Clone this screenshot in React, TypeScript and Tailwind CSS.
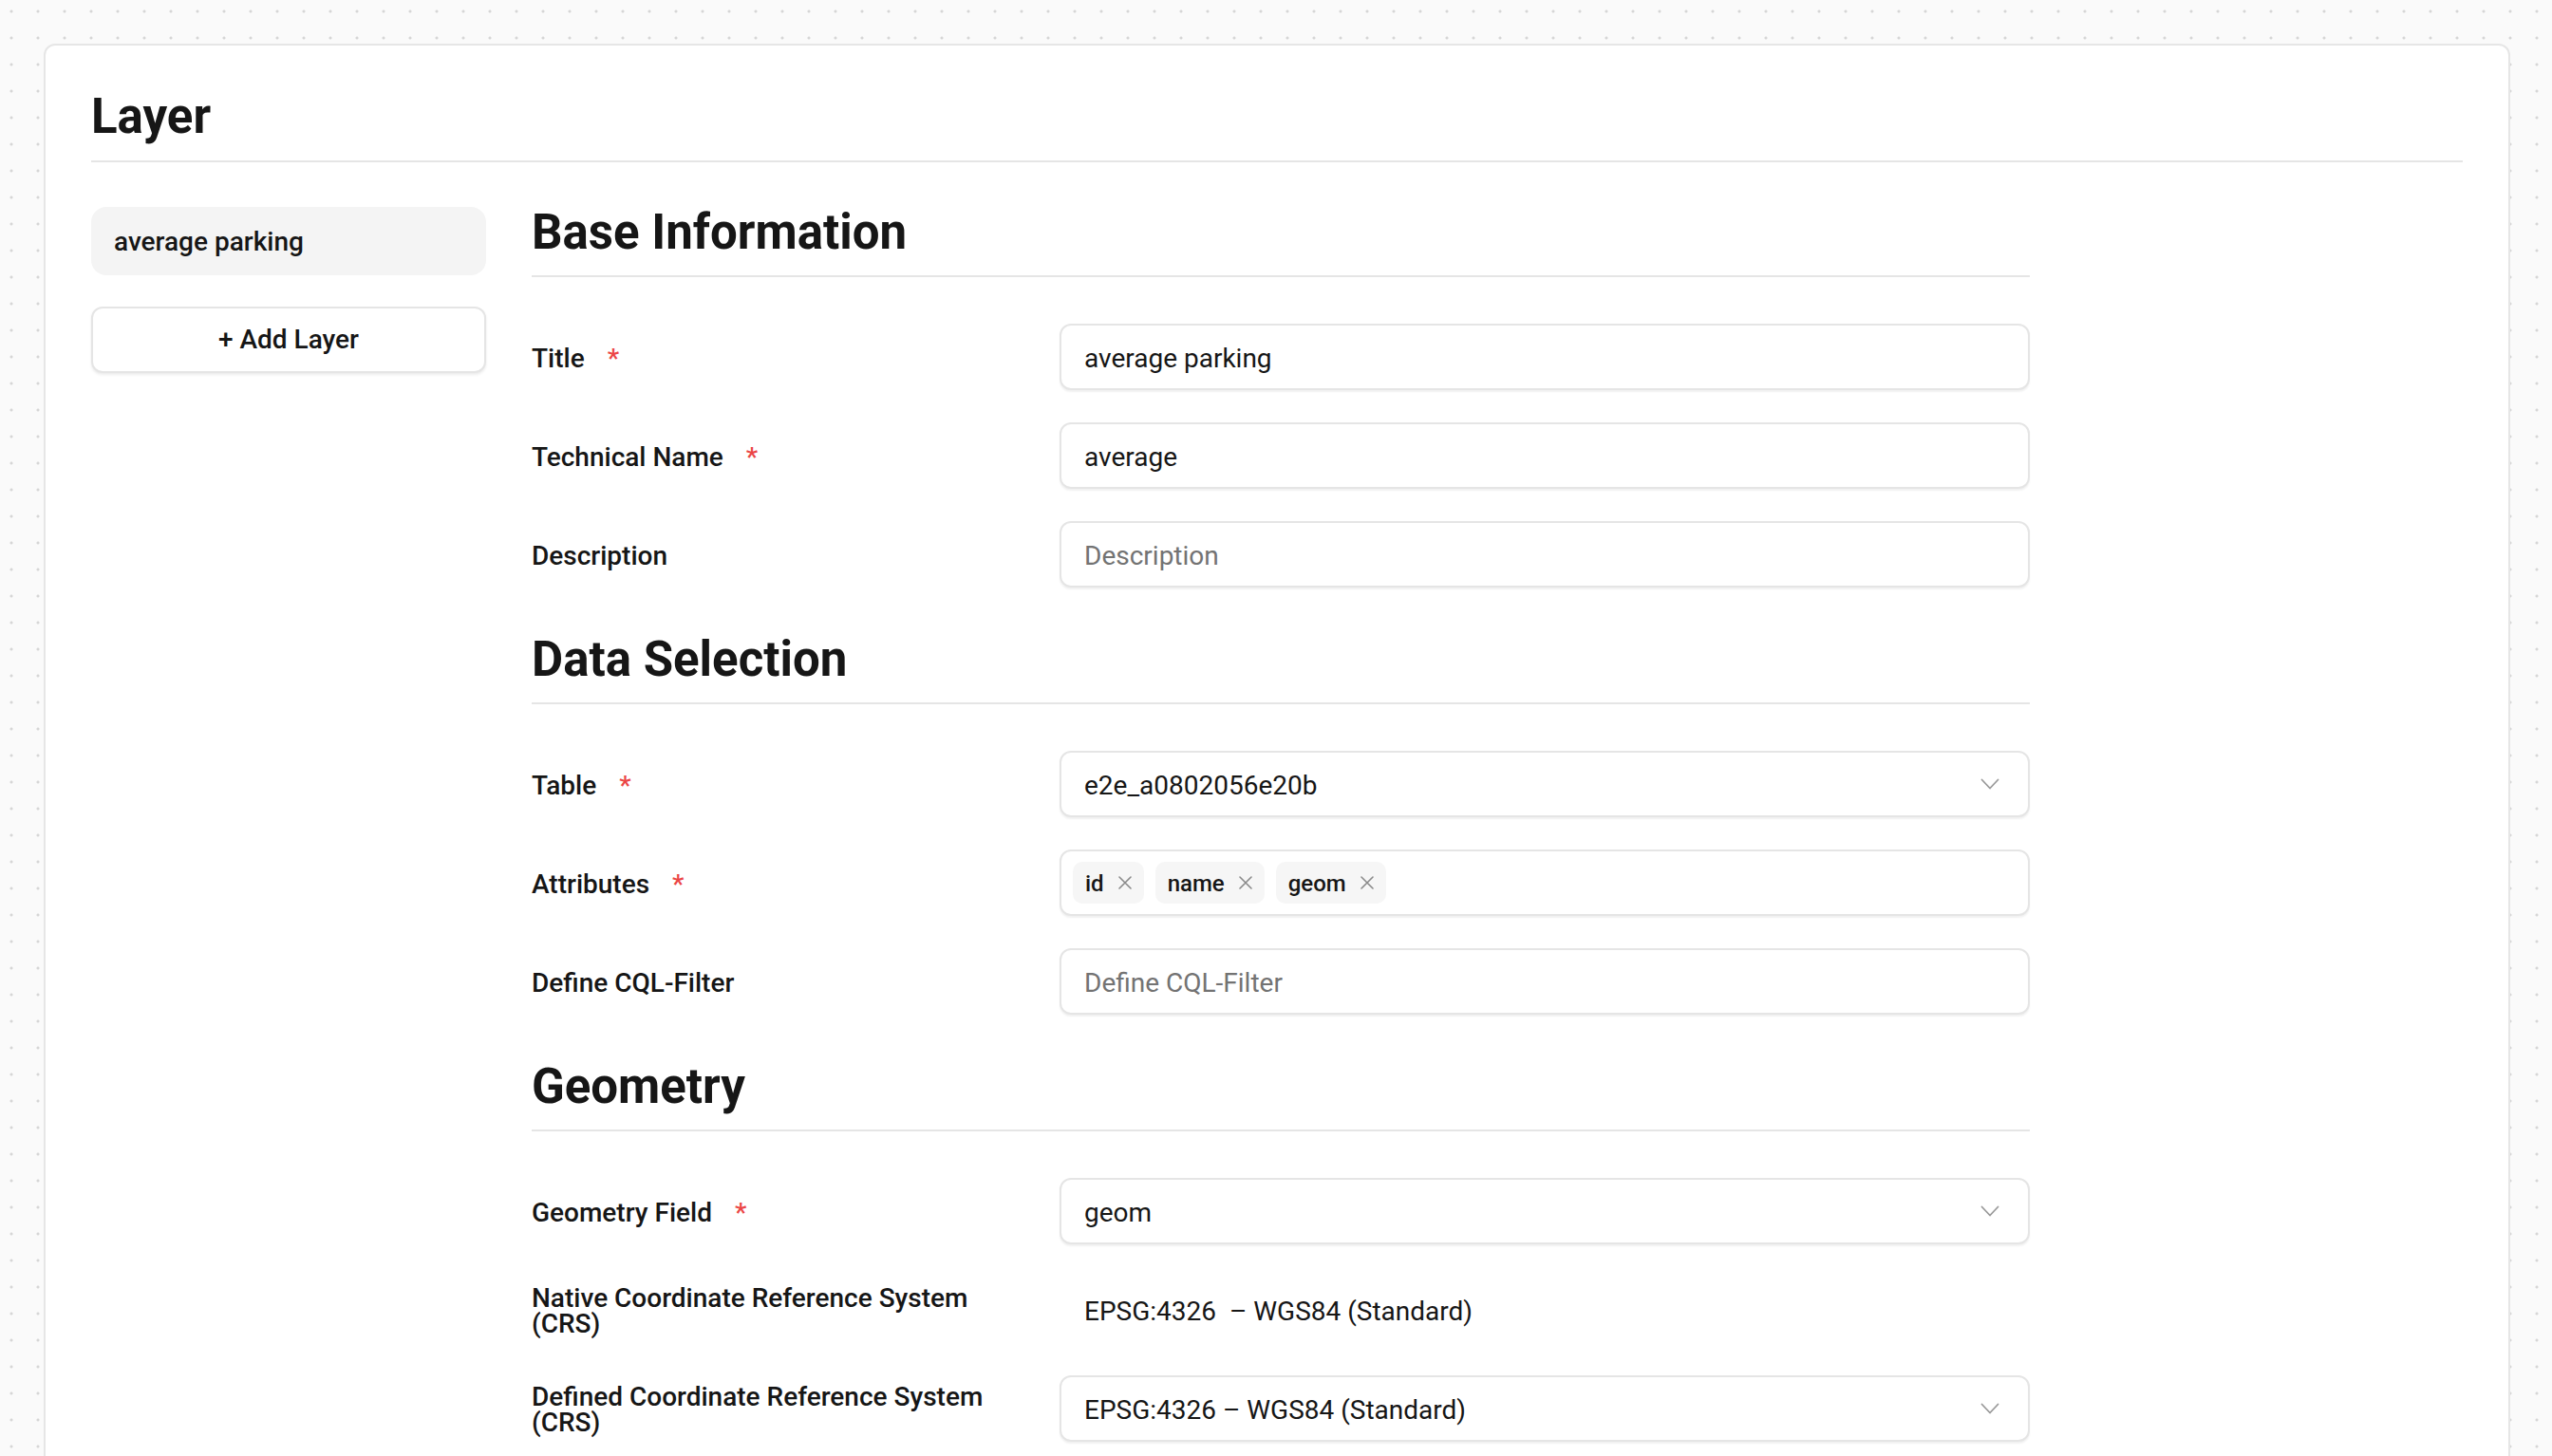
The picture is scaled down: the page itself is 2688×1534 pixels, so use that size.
import React from 'react';

const Chevron = () => (
  <svg width="20" height="12" viewBox="0 0 20 12" fill="none" stroke="#9a9a9a" strokeWidth="1.8" strokeLinecap="round" strokeLinejoin="round">
    <path d="M1.5 1.5 10 10.5 18.5 1.5" />
  </svg>
);

const Cross = () => (
  <svg width="14" height="14" viewBox="0 0 14 14" fill="none" stroke="#8a8a8a" strokeWidth="1.6" strokeLinecap="round">
    <path d="M1 1l12 12M13 1 1 13" />
  </svg>
);

const Row: React.FC<{ label: React.ReactNode; required?: boolean; children: React.ReactNode }> = ({ label, required, children }) => (
  <div className="grid grid-cols-[508px_1fr] gap-x-12 items-center">
    <div className="text-[28px] leading-[27px] font-medium pt-[2px]">
      {label}
      {required && <span className="ml-6 text-[#eb4646]">*</span>}
    </div>
    {children}
  </div>
);

const inputBox =
  'h-[70px] w-full rounded-xl border-2 border-[#e5e5e5] bg-white shadow-[0_2px_2px_rgba(0,0,0,0.06)] flex items-center';

const TextInput: React.FC<{ value?: string; placeholder?: string }> = ({ value, placeholder }) => (
  <input
    readOnly
    value={value ?? ''}
    placeholder={placeholder}
    className={`${inputBox} px-6 pt-[3px] text-[28px] text-[#161616] placeholder:text-[#737373] outline-none`}
  />
);

const Select: React.FC<{ value: string }> = ({ value }) => (
  <div className={`${inputBox} justify-between pl-6 pr-[30px] text-[28px]`}>
    <span className="pt-[3px]">{value}</span>
    <Chevron />
  </div>
);

const Tag: React.FC<{ text: string }> = ({ text }) => (
  <span className="h-[44px] rounded-[10px] bg-[#f6f6f6] px-[13px] flex items-center gap-[15px] text-[24px] font-medium">
    <span className="pt-[2px]">{text}</span>
    <Cross />
  </span>
);

const Section: React.FC<{ title: string; children: React.ReactNode }> = ({ title, children }) => (
  <section>
    <h2 className="text-[51px] leading-[54px] font-bold pb-[18px] border-b-2 border-[#e5e5e5] mb-[49px]">{title}</h2>
    <div className="flex flex-col gap-[34px]">{children}</div>
  </section>
);

export default function App() {
  return (
    <div className="min-h-screen bg-[#fafafa] bg-[radial-gradient(circle,#d6d6d6_1.4px,transparent_1.7px)] bg-[length:28px_28px] bg-[position:-2px_-2px] pt-[46px] pl-[46px] pr-[44px] pb-10 font-[Roboto,sans-serif] text-[#161616]">
      <div className="bg-white border-2 border-[#e6e6e6] rounded-xl px-12 pt-12 pb-12">
        <h1 className="text-[51px] leading-[54px] font-bold pb-[19px] border-b-2 border-[#e5e5e5]">Layer</h1>

        <div className="flex gap-12 mt-[47px]">
          <aside className="w-[416px] flex flex-col gap-[33px]">
            <div className="h-[72px] rounded-2xl bg-[#f4f4f4] px-6 pt-[2px] flex items-center text-[28px] font-medium">
              average parking
            </div>
            <button className="h-[70px] rounded-xl border-2 border-[#e5e5e5] bg-white shadow-[0_2px_3px_rgba(0,0,0,0.08)] text-[28px] font-medium">
              + Add Layer
            </button>
          </aside>

          <main className="w-[1578px] flex flex-col gap-[49px]">
            <Section title="Base Information">
              <Row label="Title" required>
                <TextInput value="average parking" />
              </Row>
              <Row label="Technical Name" required>
                <TextInput value="average" />
              </Row>
              <Row label="Description">
                <TextInput placeholder="Description" />
              </Row>
            </Section>

            <Section title="Data Selection">
              <Row label="Table" required>
                <Select value="e2e_a0802056e20b" />
              </Row>
              <Row label="Attributes" required>
                <div className={`${inputBox} pl-3 gap-3`}>
                  <Tag text="id" />
                  <Tag text="name" />
                  <Tag text="geom" />
                </div>
              </Row>
              <Row label="Define CQL-Filter">
                <TextInput placeholder="Define CQL-Filter" />
              </Row>
            </Section>

            <Section title="Geometry">
              <Row label="Geometry Field" required>
                <Select value="geom" />
              </Row>
              <Row label="Native Coordinate Reference System (CRS)">
                <div className="h-[70px] flex items-center px-[26px] pt-[3px] text-[28px] whitespace-pre">EPSG:4326  – WGS84 (Standard)</div>
              </Row>
              <Row label="Defined Coordinate Reference System (CRS)">
                <Select value="EPSG:4326 – WGS84 (Standard)" />
              </Row>
            </Section>
          </main>
        </div>
      </div>
    </div>
  );
}
